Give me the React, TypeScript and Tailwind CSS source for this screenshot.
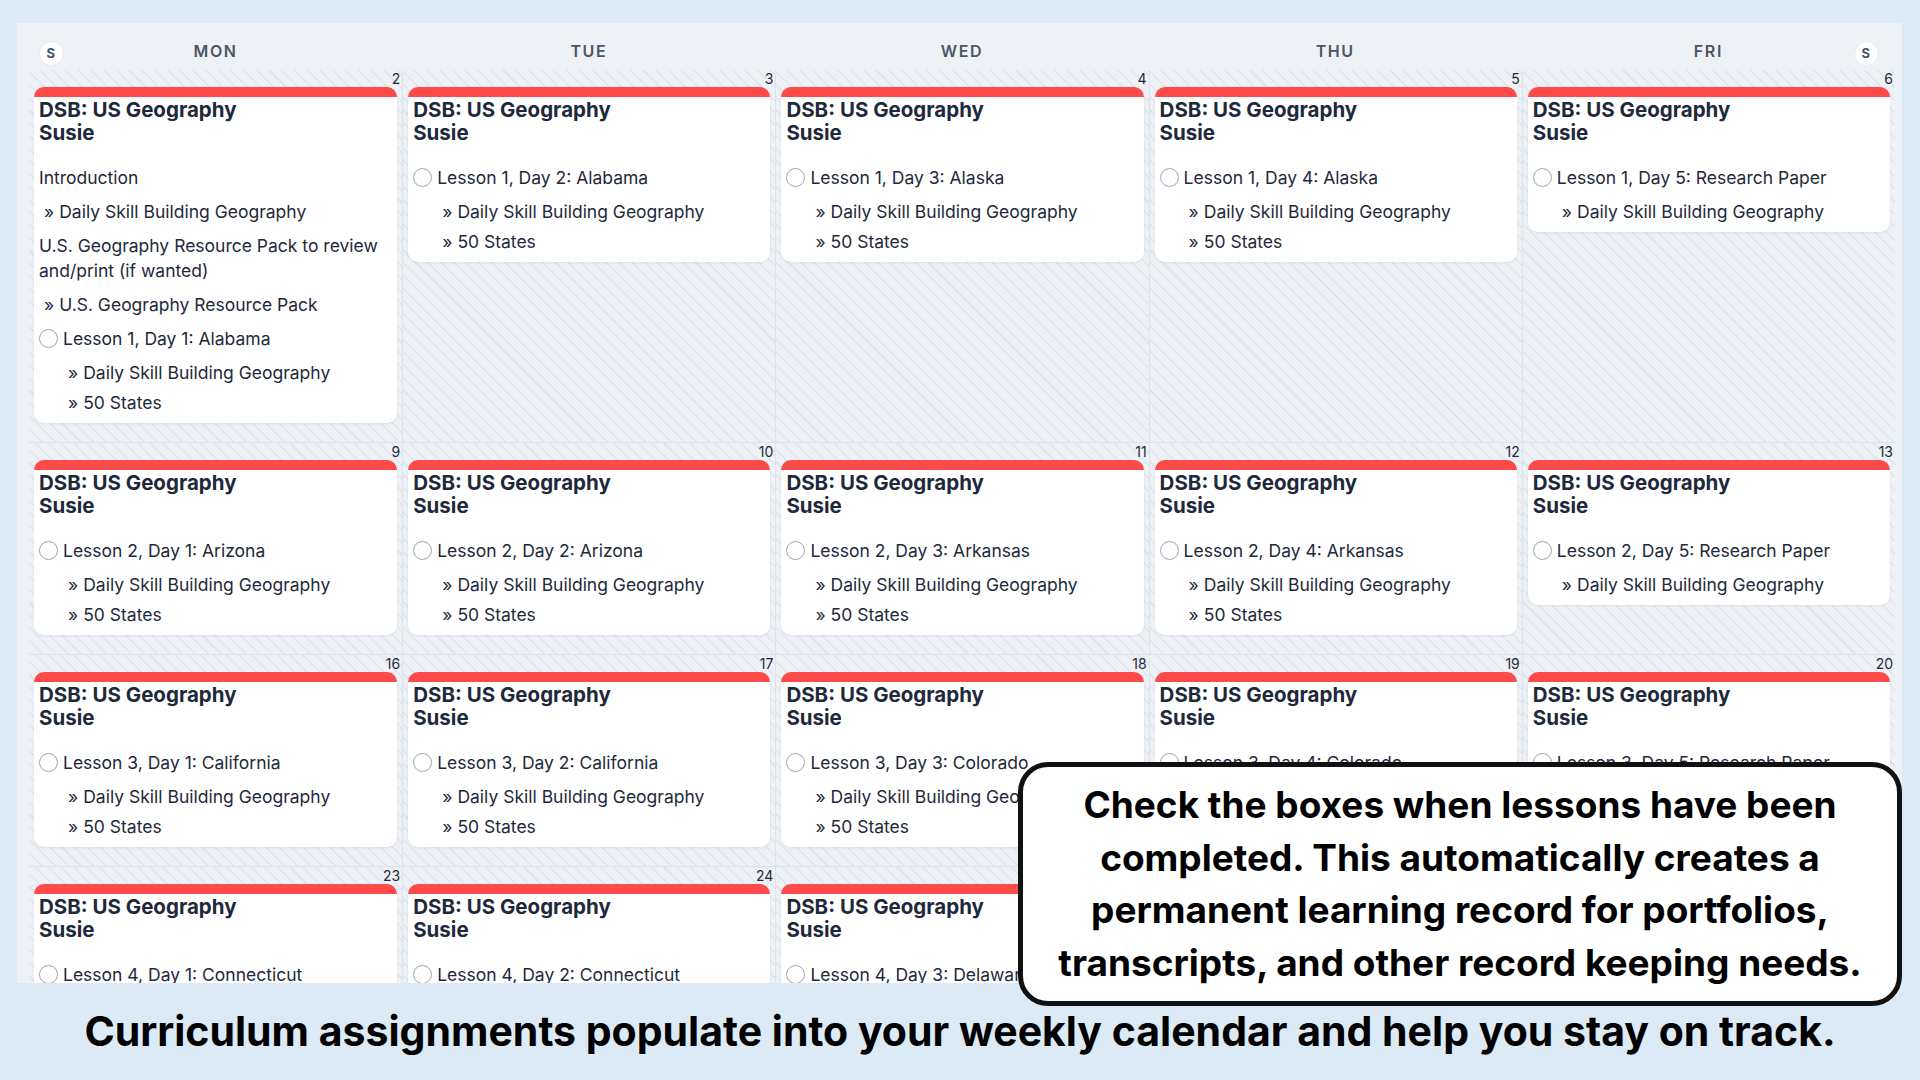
import type { ReactNode } from "react";

type Item = {
  text: string;
  lesson?: boolean;
  links: string[];
};

type Cell = {
  date: number;
  items: Item[];
};

const DSB = "Daily Skill Building Geography";
const STATES = "50 States";

const lesson = (text: string, links: string[] = [DSB, STATES]): Item => ({
  text,
  lesson: true,
  links,
});

const rows: Cell[][] = [
  [
    {
      date: 2,
      items: [
        { text: "Introduction", links: [DSB] },
        {
          text: "U.S. Geography Resource Pack to review and/print (if wanted)",
          links: ["U.S. Geography Resource Pack"],
        },
        lesson("Lesson 1, Day 1: Alabama"),
      ],
    },
    { date: 3, items: [lesson("Lesson 1, Day 2: Alabama")] },
    { date: 4, items: [lesson("Lesson 1, Day 3: Alaska")] },
    { date: 5, items: [lesson("Lesson 1, Day 4: Alaska")] },
    { date: 6, items: [lesson("Lesson 1, Day 5: Research Paper", [DSB])] },
  ],
  [
    { date: 9, items: [lesson("Lesson 2, Day 1: Arizona")] },
    { date: 10, items: [lesson("Lesson 2, Day 2: Arizona")] },
    { date: 11, items: [lesson("Lesson 2, Day 3: Arkansas")] },
    { date: 12, items: [lesson("Lesson 2, Day 4: Arkansas")] },
    { date: 13, items: [lesson("Lesson 2, Day 5: Research Paper", [DSB])] },
  ],
  [
    { date: 16, items: [lesson("Lesson 3, Day 1: California")] },
    { date: 17, items: [lesson("Lesson 3, Day 2: California")] },
    { date: 18, items: [lesson("Lesson 3, Day 3: Colorado")] },
    { date: 19, items: [lesson("Lesson 3, Day 4: Colorado")] },
    { date: 20, items: [lesson("Lesson 3, Day 5: Research Paper", [DSB])] },
  ],
  [
    { date: 23, items: [lesson("Lesson 4, Day 1: Connecticut")] },
    { date: 24, items: [lesson("Lesson 4, Day 2: Connecticut")] },
    { date: 25, items: [lesson("Lesson 4, Day 3: Delaware")] },
    { date: 26, items: [lesson("Lesson 4, Day 4: Delaware")] },
    { date: 27, items: [lesson("Lesson 4, Day 5: Research Paper", [DSB])] },
  ],
];

const days = ["MON", "TUE", "WED", "THU", "FRI"];

const WeekendToggle = ({ side }: { side: "left" | "right" }) => (
  <span
    className={`absolute top-[18px] flex h-[25px] w-[25px] items-center justify-center rounded-full border border-[#e5e9ef] bg-white text-[13px] font-bold text-[#475569] ${
      side === "left" ? "left-[10px]" : "right-[16px]"
    }`}
  >
    S
  </span>
);

const LinkLine = ({ children }: { children: ReactNode }) => (
  <p className="leading-[25px]">
    <span className="mr-[5px]">»</span>
    {children}
  </p>
);

const AssignmentItem = ({ item }: { item: Item }) => {
  if (!item.lesson) {
    return (
      <div className="flex flex-col gap-[9px]">
        <p className="leading-[25px]">{item.text}</p>
        <div className="pl-[5px]">
          {item.links.map((link) => (
            <LinkLine key={link}>{link}</LinkLine>
          ))}
        </div>
      </div>
    );
  }

  return (
    <div className="flex flex-col gap-[9px]">
      <label className="flex items-center gap-[5px] leading-[25px]">
        <span className="h-[19px] w-[19px] shrink-0 rounded-full border border-[#9ca5b1] bg-white" />
        <span>{item.text}</span>
      </label>
      <div className="flex flex-col gap-[5px] pl-[29px]">
        {item.links.map((link) => (
          <LinkLine key={link}>{link}</LinkLine>
        ))}
      </div>
    </div>
  );
};

const AssignmentCard = ({ items }: { items: Item[] }) => (
  <div className="rounded-[10px] border-t-[10px] border-[#ff4a4a] bg-white px-[5px] pb-[8px] pt-[1px] text-[#1e293b] shadow-[0_1px_3px_rgba(15,23,42,0.08)]">
    <h3 className="text-[20.5px] font-bold leading-[23px]">
      DSB: US Geography
      <br />
      Susie
    </h3>
    <div className="mt-[21px] flex flex-col gap-[9px] text-[17.5px]">
      {items.map((item) => (
        <AssignmentItem key={item.text} item={item} />
      ))}
    </div>
  </div>
);

const DayCell = ({ cell, first }: { cell: Cell; first: boolean }) => (
  <div
    className={`px-[5px] pb-[19px] bg-[repeating-linear-gradient(45deg,#e1e6ed_0px,#e1e6ed_1.5px,transparent_1.5px,transparent_9px)] ${
      first ? "" : "border-l border-[#dde3ea]"
    }`}
  >
    <div className="-mr-[3px] h-[17px] text-right text-[14px] leading-[17px] text-[#1f2937]">
      {cell.date}
    </div>
    <AssignmentCard items={cell.items} />
  </div>
);

export default function App() {
  return (
    <div className="relative h-[1080px] w-[1920px] overflow-hidden bg-[#dbeaf5] font-['Inter',sans-serif]">
      <div className="ml-[17px] mr-[18px] mt-[23px] h-[960px] overflow-hidden bg-[#eef2f7] pl-[12px] pr-[7px]">
        <div className="grid grid-cols-5">
          {days.map((day, i) => (
            <div
              key={day}
              className="relative flex h-[47px] items-center justify-center pt-[9px] text-[16px] font-semibold tracking-[0.1em] text-[#4b5563]"
            >
              {i === 0 && <WeekendToggle side="left" />}
              {day}
              {i === days.length - 1 && <WeekendToggle side="right" />}
            </div>
          ))}
        </div>

        {rows.map((row, r) => (
          <div
            key={r}
            className={`grid grid-cols-5 ${r > 0 ? "border-t border-[#dde3ea]" : ""}`}
          >
            {row.map((cell, i) => (
              <DayCell key={cell.date} cell={cell} first={i === 0} />
            ))}
          </div>
        ))}
      </div>

      <div className="flex h-[97px] items-center justify-center text-[41px] font-bold text-black">
        Curriculum assignments populate into your weekly calendar and help you stay on track.
      </div>

      {/* callout over the calendar */}
      <div className="absolute left-[1018px] top-[762px] flex h-[244px] w-[884px] flex-col items-center justify-center rounded-[30px] border-[5px] border-[#111111] bg-white text-center text-[37px] font-bold leading-[52.5px] text-black">
        <p>Check the boxes when lessons have been</p>
        <p>completed. This automatically creates a</p>
        <p>permanent learning record for portfolios,</p>
        <p>transcripts, and other record keeping needs.</p>
      </div>
    </div>
  );
}
